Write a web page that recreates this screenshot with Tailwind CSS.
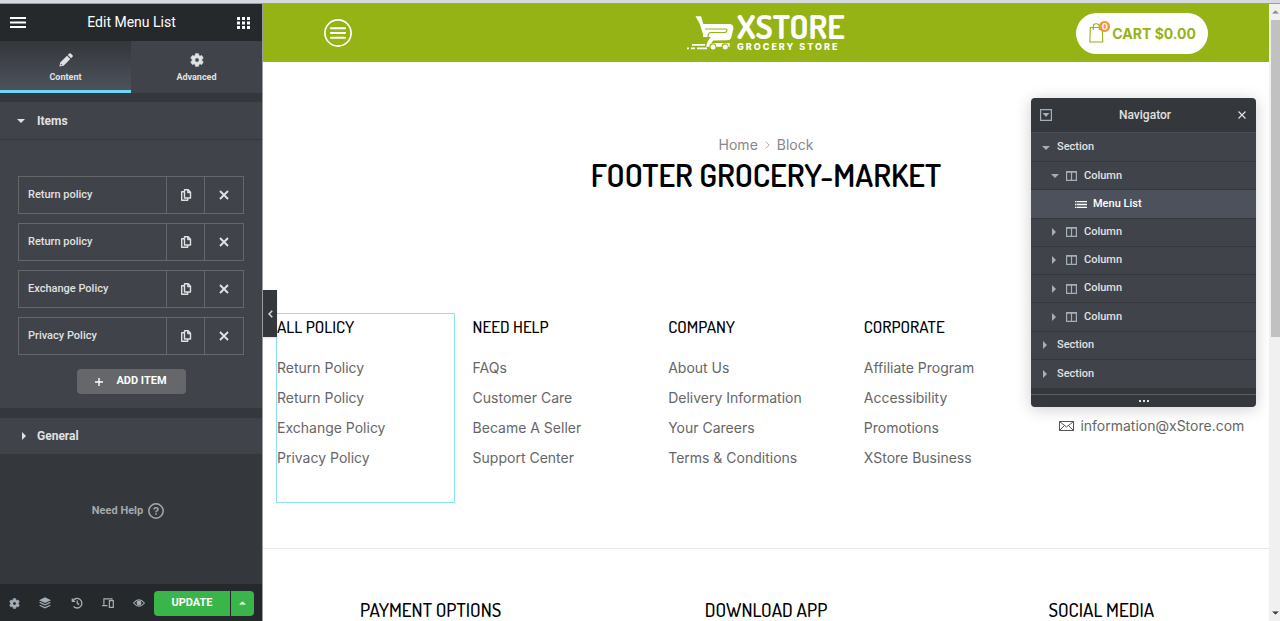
<!DOCTYPE html>
<html lang="en">
<head>
  <meta charset="UTF-8" />
  <meta name="viewport" content="width=device-width, initial-scale=1.0"/>
  <title>Elementor | Footer Grocery-Market</title>
  <script src="https://cdn.jsdelivr.net/npm/@tailwindcss/browser@4"></script>
</head>
<body class="h-screen overflow-hidden flex flex-col bg-white font-['Roboto',sans-serif]">

  <!-- Shared icons -->
  <svg class="hidden">
    <symbol id="copy" viewBox="0 0 12 12"><path d="M4.500 .8h3.700L10.500 3.300V9h-6z M7.800 .8V3.500H10.500 M4.500 2.800H1.700V11.200H7.700V9" fill="none" stroke="currentColor" stroke-width="1.400" stroke-linejoin="round"/></symbol>
    <symbol id="close" viewBox="0 0 10 10"><path d="M1 1l8 8M9 1L1 9" fill="none" stroke="currentColor" stroke-width="1.900"/></symbol>
    <symbol id="gear" viewBox="0 0 16 16"><path fill-rule="evenodd" fill="currentColor" d="M6.300.8h3.400l.4 2 1.300.8 2-.7 1.700 3-1.600 1.300v1.600l1.600 1.300-1.700 3-2-.7-1.300.8-.4 2H6.300l-.4-2-1.300-.8-2 .7-1.700-3 1.600-1.300V7.200L.9 5.900l1.700-3 2 .7 1.300-.8zM8 5.500a2.500 2.500 0 100 5 2.500 2.500 0 000-5z" stroke="currentColor" stroke-width=".8" stroke-linejoin="round"/></symbol>
    <symbol id="columns" viewBox="0 0 11 10"><path d="M.6 .6h9.800v8.800H.6zM5.500.6v8.800M.6 1.200h9.800" fill="none" stroke="currentColor" stroke-width="1.200"/></symbol>
    <symbol id="down" viewBox="0 0 8 4"><path d="M0 0h8L4 4z" fill="currentColor"/></symbol>
    <symbol id="right" viewBox="0 0 4 8"><path d="M0 0v8l4-4z" fill="currentColor"/></symbol>
  </svg>

  <div class="h-1 shrink-0 bg-[#d8d8e0] border-b border-[#9d9da8]"></div>

  <div class="flex flex-1 min-h-0">

    <!-- Editor panel -->
    <aside class="w-[263px] shrink-0 flex flex-col bg-[#34383c] text-[#e0e1e3] border-r border-[#9a9ca0]">
      <header class="h-[37px] shrink-0 bg-[#26292c] text-white flex items-center justify-between pl-[10px] pr-3">
        <button aria-label="Menu"><svg class="w-4 h-[11px]" viewBox="0 0 16 11"><path d="M0 1h16M0 5.500h16M0 10h16" stroke="currentColor" stroke-width="2"/></svg></button>
        <h1 class="text-[14px]">Edit Menu List</h1>
        <button aria-label="Widgets"><svg class="w-[13px] h-[12px]" viewBox="0 0 13 12"><path d="M0 1.500h3m2 0h3m2 0h3M0 6h3m2 0h3m2 0h3M0 10.500h3m2 0h3m2 0h3" stroke="currentColor" stroke-width="3"/></svg></button>
      </header>

      <nav class="grid grid-cols-2 h-[52px] shrink-0 text-[9px] font-bold">
        <button class="flex flex-col items-center pt-3 gap-1 bg-linear-to-b from-[#34383c] to-[#4d515b] border-b-3 border-[#71d7f7]">
          <svg class="size-[14px]" viewBox="0 0 14 14"><path fill="currentColor" d="M8.800 1.900L10.200.5q.8-.7 1.500 0l1.800 1.800q.7.700 0 1.500L12.100 5.200zM8 2.700l3.300 3.300-6.700 6.800L.4 13.600l.8-4.200zM2 10.600l1.400 1.400-1.600.3z" fill-rule="evenodd"/></svg>
          Content
        </button>
        <button class="flex flex-col items-center pt-3 gap-1 bg-[#404349]">
          <svg class="size-[14px]"><use href="#gear"/></svg>
          Advanced
        </button>
      </nav>

      <section class="mt-[9px] bg-[#404349]">
        <h2><button class="w-full h-[38px] flex items-center text-[12px] font-bold pl-[17px] gap-[12px] border-b border-[#34383c]"><svg class="w-2 h-1"><use href="#down"/></svg>Items</button></h2>
        <div class="pt-9 pb-[14px] px-[18px]">
          <ul class="space-y-[9px] text-[11px] font-medium">
            <li class="flex h-[38px] border border-[#64676c] divide-x divide-[#64676c]">
              <button class="flex-1 text-left pl-[9px]">Return policy</button>
              <button class="w-[38px] grid place-items-center" aria-label="Duplicate"><svg class="size-3"><use href="#copy"/></svg></button>
              <button class="w-[38px] grid place-items-center" aria-label="Remove"><svg class="size-[10px]"><use href="#close"/></svg></button>
            </li>
            <li class="flex h-[38px] border border-[#64676c] divide-x divide-[#64676c]">
              <button class="flex-1 text-left pl-[9px]">Return policy</button>
              <button class="w-[38px] grid place-items-center" aria-label="Duplicate"><svg class="size-3"><use href="#copy"/></svg></button>
              <button class="w-[38px] grid place-items-center" aria-label="Remove"><svg class="size-[10px]"><use href="#close"/></svg></button>
            </li>
            <li class="flex h-[38px] border border-[#64676c] divide-x divide-[#64676c]">
              <button class="flex-1 text-left pl-[9px]">Exchange Policy</button>
              <button class="w-[38px] grid place-items-center" aria-label="Duplicate"><svg class="size-3"><use href="#copy"/></svg></button>
              <button class="w-[38px] grid place-items-center" aria-label="Remove"><svg class="size-[10px]"><use href="#close"/></svg></button>
            </li>
            <li class="flex h-[38px] border border-[#64676c] divide-x divide-[#64676c]">
              <button class="flex-1 text-left pl-[9px]">Privacy Policy</button>
              <button class="w-[38px] grid place-items-center" aria-label="Duplicate"><svg class="size-3"><use href="#copy"/></svg></button>
              <button class="w-[38px] grid place-items-center" aria-label="Remove"><svg class="size-[10px]"><use href="#close"/></svg></button>
            </li>
          </ul>
          <button class="mt-[14px] mx-auto w-[109px] h-[25px] rounded-sm bg-[#65676b] text-white text-[11px] font-bold flex items-center justify-center gap-[13px]">
            <svg class="size-2" viewBox="0 0 8 8"><path d="M4 0v8M0 4h8" stroke="currentColor" stroke-width="1.400"/></svg>
            ADD ITEM
          </button>
        </div>
      </section>

      <section class="mt-[10px] bg-[#404349]">
        <h2><button class="w-full h-9 flex items-center text-[12px] font-bold pl-[22px] gap-[11px]"><svg class="w-1 h-2"><use href="#right"/></svg>General</button></h2>
      </section>

      <a href="#" class="mt-12 mx-auto pr-[6px] flex items-center gap-[5px] text-[11px] leading-[18px] font-bold text-[#a4a9ae]">
        Need Help
        <svg class="size-4" viewBox="0 0 16 16" fill="none" stroke="currentColor"><circle cx="8" cy="8" r="7.200" stroke-width="1.500"/><path d="M6 6.600q0-1.900 2-1.900t2 1.700q0 1-1.100 1.500T8 9.300" stroke-width="1.500"/><path d="M8 10.300v1.500" stroke-width="1.600"/></svg>
      </a>

      <footer class="mt-auto h-[37px] shrink-0 bg-[#26292c] text-[#a4afb7] flex items-center justify-between pl-[9px] pr-2 pt-px">
        <div class="w-[136px] flex items-center justify-between">
          <button aria-label="Settings"><svg class="size-[11px]"><use href="#gear"/></svg></button>
          <button aria-label="Navigator"><svg class="size-3" viewBox="0 0 12 12" fill="currentColor"><path d="M6 .3l6 2.900-6 2.900L0 3.200zM0 5.700l1.500-.7L6 7.200l4.500-2.200 1.500.7-6 2.900zM0 8.600l1.500-.7L6 10.100l4.500-2.200 1.500.7-6 2.900z"/></svg></button>
          <button aria-label="History"><svg class="size-3" viewBox="0 0 12 12" fill="none" stroke="currentColor" stroke-width="1.300"><path d="M1.900 3.800A4.800 4.800 0 112.600 9.500M1.300 1.500v2.900h2.900M6.300 3.400v3l1.900 1.200"/></svg></button>
          <button aria-label="Responsive mode"><svg class="w-3 h-[10px]" viewBox="0 0 12 10" fill="none" stroke="currentColor" stroke-width="1.200"><path d="M10 1.800V.9H1.900v5.800M0 7.600h5.500M7.400 2.600h3.900v6.700H7.400z"/></svg></button>
          <button aria-label="Preview"><svg class="w-3 h-2" viewBox="0 0 12 8"><path d="M.6 4Q6-2.400 11.400 4 6 10.400.6 4z" fill="none" stroke="currentColor" stroke-width="1.100"/><circle cx="6" cy="4" r="2.400" fill="currentColor"/></svg></button>
        </div>
        <div class="flex gap-px text-white">
          <button class="w-[76px] h-[25px] rounded-l-sm bg-[#39b54a] text-[11px] font-bold">UPDATE</button>
          <button class="w-[23px] h-[25px] rounded-r-sm bg-[#39b54a] grid place-items-center" aria-label="Save options"><svg class="w-[7px] h-1 rotate-180" viewBox="0 0 8 4"><use href="#down"/></svg></button>
        </div>
      </footer>
    </aside>

    <!-- Page preview -->
    <main class="relative flex-1 min-w-0 overflow-hidden font-['Inter',sans-serif] text-[#666]">
      <button class="absolute left-0 top-[286px] w-[14px] h-[47px] bg-[#34383c] text-[#d5dadf] grid place-items-center shadow" aria-label="Hide panel"><svg class="w-[5px] h-2" viewBox="0 0 5 8"><path d="M4.300.7L1 4l3.300 3.300" fill="none" stroke="currentColor" stroke-width="1.500"/></svg></button>

      <header class="h-[58px] bg-[#95b315] text-white grid grid-cols-3 items-center px-[61px]">
        <button class="justify-self-start" aria-label="Open menu"><svg class="size-7" viewBox="0 0 28 28" fill="none" stroke="currentColor"><circle cx="14" cy="14" r="13.100" stroke-width="1.700"/><path d="M6.900 9.200h14.200M6.900 14h14.200M6.900 18.800h14.200" stroke-width="1.900" stroke-linecap="round"/></svg></button>
        <a href="#" class="justify-self-center" aria-label="XStore grocery store">
          <svg class="w-[162px] h-14" viewBox="0 -8 162 56">
            <path fill="#fff" d="M10.500 3.300h5.600l2.200 7.600h25.500q5.200 0 4.500 5l-1.900 8.200q-.8 3.200-4 3.200l-14 .3-2.200 2.500h18.500v3.600h-1.300a3.400 3.400 0 00-6.800 0h-5.400a3.400 3.400 0 00-6.800 0h-3.200q-.2-2.500 2-6l2.500-3.700h-7.700v-2.700l-3.200-10.300z"/>
            <path d="M20 16h20.500q2 0 1.300 2-.5 1.500-2 1.500H26q-3 0-3 4.500" fill="none" stroke="#95b315" stroke-width="1.100"/>
            <g fill="#fff"><circle cx="28" cy="34" r="2.500"/><circle cx="40.200" cy="34" r="2.500"/></g>
            <path d="M7 31.800h13M2 35.300h2M6 35.300h4M12 35.300h10" stroke="#fff" stroke-width="1.800"/>
            <text x="52" y="26" fill="#fff" font-size="33" font-weight="700" class="font-['Dosis','Roboto_Condensed','Liberation_Sans_Narrow',sans-serif]">XSTORE</text>
            <text x="52" y="37" fill="#fff" font-size="9" font-weight="800" class="tracking-[2px]">GROCERY STORE</text>
          </svg>
        </a>
        <a href="#" class="justify-self-end h-[41px] px-3 rounded-full bg-white text-[#95b315] flex items-center gap-[2px] text-[14px] font-bold whitespace-nowrap">
          <span class="relative">
            <svg class="w-[22px] h-5" viewBox="0 0 22 20" fill="none" stroke="currentColor" stroke-width="1.100"><path d="M2.300 4.500h12l.5 14.500h-13zM5.300 7V3.500q0-2.700 3-2.700t3 2.700V7"/></svg>
            <span class="absolute -top-[2px] right-0 size-[11px] rounded-full bg-[#f7923a] text-white text-[9px] leading-[11px] text-center">0</span>
          </span>
          CART $0.00
        </a>
      </header>

      <div class="pt-[73px] text-center">
        <nav class="flex justify-center items-center gap-[7px] text-[14px] leading-5 text-[#888]">
          <a href="#">Home</a>
          <svg class="w-[5px] h-2" viewBox="0 0 5 8"><path d="M.7.5L4.200 4 .7 7.500" fill="none" stroke="#aaa"/></svg>
          <a href="#">Block</a>
        </nav>
        <h1 class="text-[32px] leading-10 font-semibold text-black font-['Dosis','Roboto_Condensed','Liberation_Sans_Narrow',sans-serif]">FOOTER GROCERY-MARKET</h1>
      </div>

      <div class="mt-[118px] ml-[13px] mr-[15px] grid grid-cols-5 text-[14px] whitespace-nowrap">
        <section class="mr-[17px] h-[190px] border border-[#8adff8]">
          <h2 class="mt-[3px] text-[17px] leading-5 font-medium text-black font-['Dosis','Roboto_Condensed','Liberation_Sans_Narrow',sans-serif]">ALL POLICY</h2>
          <ul class="mt-4 leading-[30px]">
            <li><a href="#">Return Policy</a></li>
            <li><a href="#">Return Policy</a></li>
            <li><a href="#">Exchange Policy</a></li>
            <li><a href="#">Privacy Policy</a></li>
          </ul>
        </section>
        <section class="p-px">
          <h2 class="mt-[3px] text-[17px] leading-5 font-medium text-black font-['Dosis','Roboto_Condensed','Liberation_Sans_Narrow',sans-serif]">NEED HELP</h2>
          <ul class="mt-4 leading-[30px]">
            <li><a href="#">FAQs</a></li>
            <li><a href="#">Customer Care</a></li>
            <li><a href="#">Became A Seller</a></li>
            <li><a href="#">Support Center</a></li>
          </ul>
        </section>
        <section class="p-px">
          <h2 class="mt-[3px] text-[17px] leading-5 font-medium text-black font-['Dosis','Roboto_Condensed','Liberation_Sans_Narrow',sans-serif]">COMPANY</h2>
          <ul class="mt-4 leading-[30px]">
            <li><a href="#">About Us</a></li>
            <li><a href="#">Delivery Information</a></li>
            <li><a href="#">Your Careers</a></li>
            <li><a href="#">Terms &amp; Conditions</a></li>
          </ul>
        </section>
        <section class="p-px">
          <h2 class="mt-[3px] text-[17px] leading-5 font-medium text-black font-['Dosis','Roboto_Condensed','Liberation_Sans_Narrow',sans-serif]">CORPORATE</h2>
          <ul class="mt-4 leading-[30px]">
            <li><a href="#">Affiliate Program</a></li>
            <li><a href="#">Accessibility</a></li>
            <li><a href="#">Promotions</a></li>
            <li><a href="#">XStore Business</a></li>
          </ul>
        </section>
        <section class="p-px pt-[98px]">
          <a href="#" class="flex items-center gap-[6px] leading-[30px]">
            <svg class="w-[15px] h-[10px]" viewBox="0 0 15 10" fill="none" stroke="#555"><path d="M.5.5h14v9H.5zM.5.5l7 5.500 7-5.500M.5 9.500l5-5M14.500 9.500l-5-5"/></svg>
            information@xStore.com
          </a>
        </section>
      </div>

      <div class="mt-[45px] pt-[49px] border-t border-[#e8e8e8] grid grid-cols-3 text-center text-[19px] leading-6 font-medium text-black font-['Dosis','Roboto_Condensed','Liberation_Sans_Narrow',sans-serif]">
        <h2>PAYMENT OPTIONS</h2>
        <h2>DOWNLOAD APP</h2>
        <h2>SOCIAL MEDIA</h2>
      </div>

      <!-- Navigator -->
      <div class="absolute top-[94px] right-[13px] w-[225px] rounded-sm overflow-hidden bg-[#34383c] text-[#e0e1e3] shadow-[0_2px_16px_rgba(0,0,0,0.2)] font-['Roboto',sans-serif]">
        <div class="h-[35px] pl-[9px] pr-[10px] flex items-center justify-between border-b border-[#4a4e54] text-[12px] font-medium">
          <button aria-label="Expand all" class="text-[#a4afb7]"><svg class="size-3" viewBox="0 0 12 12"><path d="M.6.6h10.800v10.800H.6z" fill="none" stroke="currentColor" stroke-width="1.200"/><path d="M2.500 4h7L6 8z" fill="currentColor"/></svg></button>
          <h3>Navigator</h3>
          <button aria-label="Close"><svg class="size-2" viewBox="0 0 8 8"><path d="M.5.500l7 7M7.500.500l-7 7" stroke="currentColor" stroke-width="1.200"/></svg></button>
        </div>
        <ul class="h-[255px] pt-px grid auto-rows-fr bg-[#404349] divide-y divide-[#34383c] text-[11px] font-medium">
          <li class="flex items-center gap-[7px] pl-[11px]"><svg class="w-2 h-1 text-[#a4afb7]"><use href="#down"/></svg>Section</li>
          <li class="flex items-center gap-[7px] pl-5"><svg class="w-2 h-1 text-[#a4afb7]"><use href="#down"/></svg><svg class="w-[11px] h-[10px] text-[#a4afb7]"><use href="#columns"/></svg>Column</li>
          <li class="flex items-center gap-[6px] pl-11 bg-[#4d515b] text-white"><svg class="w-3 h-[7px]" viewBox="0 0 12 7"><path d="M0 .7h1.500M2 .7H12M0 3.500h1.500M2 3.500H12M0 6.300h1.500M2 6.300H12" stroke="currentColor" stroke-width="1.300"/></svg>Menu List</li>
          <li class="flex items-center gap-[10px] pl-[21px]"><svg class="w-1 h-2 text-[#a4afb7]"><use href="#right"/></svg><span class="flex items-center gap-[7px]"><svg class="w-[11px] h-[10px] text-[#a4afb7]"><use href="#columns"/></svg>Column</span></li>
          <li class="flex items-center gap-[10px] pl-[21px]"><svg class="w-1 h-2 text-[#a4afb7]"><use href="#right"/></svg><span class="flex items-center gap-[7px]"><svg class="w-[11px] h-[10px] text-[#a4afb7]"><use href="#columns"/></svg>Column</span></li>
          <li class="flex items-center gap-[10px] pl-[21px]"><svg class="w-1 h-2 text-[#a4afb7]"><use href="#right"/></svg><span class="flex items-center gap-[7px]"><svg class="w-[11px] h-[10px] text-[#a4afb7]"><use href="#columns"/></svg>Column</span></li>
          <li class="flex items-center gap-[10px] pl-[21px]"><svg class="w-1 h-2 text-[#a4afb7]"><use href="#right"/></svg><span class="flex items-center gap-[7px]"><svg class="w-[11px] h-[10px] text-[#a4afb7]"><use href="#columns"/></svg>Column</span></li>
          <li class="flex items-center gap-[10px] pl-3"><svg class="w-1 h-2 text-[#a4afb7]"><use href="#right"/></svg>Section</li>
          <li class="flex items-center gap-[10px] pl-3"><svg class="w-1 h-2 text-[#a4afb7]"><use href="#right"/></svg>Section</li>
        </ul>
        <div class="mt-[6px] h-[13px] border-t border-[#5a5d62] grid place-items-center"><svg class="w-[10px] h-[2px]" viewBox="0 0 10 2"><path d="M0 1h2m2 0h2m2 0h2" stroke="currentColor" stroke-width="2"/></svg></div>
      </div>
    </main>

    <!-- Scrollbar -->
    <div class="w-[11px] shrink-0 flex flex-col items-center bg-[#f0f0f0] pl-[2px]">
      <div class="h-4 grid place-items-center text-[#8a8a8a]"><svg class="w-[7px] h-1 rotate-180" viewBox="0 0 8 4"><use href="#down"/></svg></div>
      <div class="w-full h-[317px] bg-[#c1c1c1]"></div>
      <div class="mt-auto h-4 grid place-items-center text-[#404040]"><svg class="w-[7px] h-1" viewBox="0 0 8 4"><use href="#down"/></svg></div>
    </div>
  </div>
</body>
</html>
